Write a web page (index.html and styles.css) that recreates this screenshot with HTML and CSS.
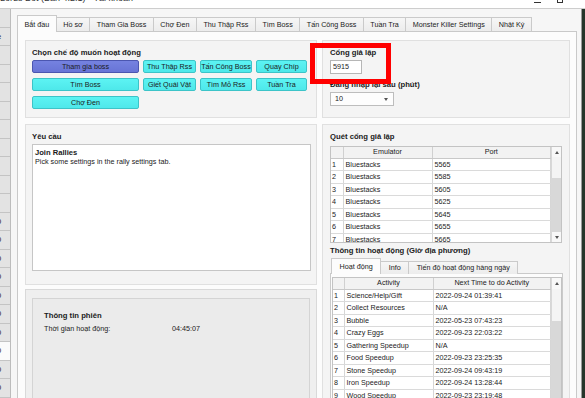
FILE: index.html
```html
<!DOCTYPE html>
<html lang="vi">
<head>
  <meta charset="UTF-8">
  <title>Bắt đầu</title>
  <link rel="stylesheet" href="styles.css">
</head>
<body>
  <div class="titlebar">
    <span class="title">Lords Bot (Bản 4.2.1) - Tài khoản</span>
    <span class="winctl"><i class="min"></i><i class="max"></i></span>
  </div>

  <div class="window">
    <div class="sidelist">
      <div></div><div><span>e</span></div><div></div><div></div><div></div><div></div>
      <div></div><div></div><div></div><div></div><div></div>
      <div><span>0</span></div><div><span>0</span></div><div><span>0</span></div>
      <div><span>0</span></div><div><span>0</span></div><div><span>0</span></div>
      <div><span>0</span></div><div class="sel"><span>0</span></div>
      <div><span>0</span></div><div><span>0</span></div><div><span>0</span></div>
    </div>

    <div class="main">
      <div class="tabs">
        <div class="tab active">Bắt đầu</div>
        <div class="tab">Hồ sơ</div>
        <div class="tab">Tham Gia Boss</div>
        <div class="tab">Chợ Đen</div>
        <div class="tab">Thu Thập Rss</div>
        <div class="tab">Tìm Boss</div>
        <div class="tab">Tấn Công Boss</div>
        <div class="tab">Tuần Tra</div>
        <div class="tab">Monster Killer Settings</div>
        <div class="tab">Nhật Ký</div>
      </div>

      <div class="pane">
        <div class="col left">
          <section class="group modes">
            <div class="label">Chọn chế độ muốn hoạt động</div>
            <div class="btns">
              <div class="btn on">Tham gia boss</div>
              <div class="btn">Thu Thập Rss</div>
              <div class="btn">Tấn Công Boss</div>
              <div class="btn">Quay Chíp</div>
              <div class="btn">Tìm Boss</div>
              <div class="btn">Giết Quái Vật</div>
              <div class="btn">Tìm Mỏ Rss</div>
              <div class="btn">Tuần Tra</div>
              <div class="btn">Chợ Đen</div>
            </div>
          </section>

          <section class="group req">
            <div class="label">Yêu cầu</div>
            <div class="textbox">
              <b>Join Rallies</b><br>
              Pick some settings in the rally settings tab.
            </div>
          </section>

          <section class="group session">
            <div class="sessionbox">
              <div class="label">Thông tin phiên</div>
              <div class="kv">
                <span>Thời gian hoạt động:</span>
                <span>04:45:07</span>
              </div>
            </div>
          </section>
        </div>

        <div class="col right">
          <section class="group ports">
            <div class="label">Cổng giả lập</div>
            <div class="field">5915</div>
            <div class="label sub">Đăng nhập lại sau (phút)</div>
            <div class="combo"><span>10</span><i class="tri-down"></i></div>
            <div class="highlight"></div>
          </section>

          <section class="group scan">
            <div class="label">Quét cổng giả lập</div>
            <div class="grid ports-grid">
              <table>
                <colgroup><col class="c-idx"><col class="c-name"><col></colgroup>
                <thead><tr><th></th><th>Emulator</th><th>Port</th></tr></thead>
                <tbody>
                  <tr><td>1</td><td>Bluestacks</td><td>5565</td></tr>
                  <tr><td>2</td><td>Bluestacks</td><td>5585</td></tr>
                  <tr><td>3</td><td>Bluestacks</td><td>5605</td></tr>
                  <tr><td>4</td><td>Bluestacks</td><td>5625</td></tr>
                  <tr><td>5</td><td>Bluestacks</td><td>5645</td></tr>
                  <tr><td>6</td><td>Bluestacks</td><td>5655</td></tr>
                  <tr><td>7</td><td>Bluestacks</td><td>5665</td></tr>
                </tbody>
              </table>
              <div class="vscroll">
                <div class="arrow"><i class="tri-up"></i></div>
                <div class="gap-a"></div>
                <div class="thumb"></div>
                <div class="arrow"><i class="tri-down"></i></div>
              </div>
            </div>

            <div class="label act">Thông tin hoạt động (Giờ địa phương)</div>
            <div class="subtabs">
              <div class="stab active">Hoạt động</div>
              <div class="stab">Info</div>
              <div class="stab">Tiến độ hoạt động hàng ngày</div>
            </div>
            <div class="subpane">
              <div class="grid act-grid">
                <table>
                  <colgroup><col class="c-idx2"><col class="c-name"><col></colgroup>
                  <thead><tr><th></th><th>Activity</th><th>Next Time to do Activity</th></tr></thead>
                  <tbody>
                    <tr><td>1</td><td>Science/Help/Gift</td><td>2022-09-24 01:39:41</td></tr>
                    <tr><td>2</td><td>Collect Resources</td><td>N/A</td></tr>
                    <tr><td>3</td><td>Bubble</td><td>2022-05-23 07:43:23</td></tr>
                    <tr><td>4</td><td>Crazy Eggs</td><td>2022-09-23 22:03:22</td></tr>
                    <tr><td>5</td><td>Gathering Speedup</td><td>N/A</td></tr>
                    <tr><td>6</td><td>Food Speedup</td><td>2022-09-23 23:25:35</td></tr>
                    <tr><td>7</td><td>Stone Speedup</td><td>2022-09-24 09:43:19</td></tr>
                    <tr><td>8</td><td>Iron Speedup</td><td>2022-09-24 13:28:44</td></tr>
                    <tr><td>9</td><td>Wood Speedup</td><td>2022-09-23 23:19:48</td></tr>
                    <tr><td>10</td><td>Gold Speedup</td><td>N/A</td></tr>
                  </tbody>
                </table>
                <div class="vscroll">
                  <div class="arrow tall"><i class="tri-up"></i></div>
                  <div class="gap-b"></div>
                  <div class="thumb grow"></div>
                </div>
              </div>
            </div>
          </section>
        </div>
      </div>
    </div>

    <div class="edge"></div>
  </div>
</body>
</html>
```

FILE: styles.css
```css
* {
  box-sizing: border-box;
}
body {
  margin: 0;
  width: 585px;
  height: 398px;
  overflow: hidden;
  background: #ffffff;
  font-family: 'Liberation Sans', Arial, sans-serif;
  font-size: 7.2px;
  color: #1b1b1b;
}

/* title bar (cut off at the top) */
.titlebar {
  height: 9px;
  border-bottom: 1px solid #cdcdcd;
  display: flex;
  justify-content: space-between;
  overflow: hidden;
}
.title {
  font-size: 9px;
  line-height: 9px;
  margin-top: -6px;
  color: #333;
  white-space: nowrap;
}
.winctl {
  display: flex;
  gap: 16px;
  padding-right: 22px;
}
.winctl .min {
  width: 7px;
  height: 1px;
  margin-top: 2px;
  background: #333;
}
.winctl .max {
  width: 6px;
  height: 4px;
  margin-top: -1px;
  border: 1px solid #333;
}

.window {
  display: flex;
  height: 389px;
}

/* list on the far left */
.sidelist {
  width: 11px;
  border-right: 1px solid #bcbcbc;
  background: #e3e3e3;
  overflow: hidden;
}
.sidelist div {
  height: 18.5px;
  border-bottom: 1px solid #c4c4c4;
  line-height: 18px;
  font-size: 7.5px;
  white-space: nowrap;
}
.sidelist span {
  margin-left: -3px;
}
.sidelist .sel {
  background: #fbfbfb;
}

.main {
  flex: 1;
  background: #f6f6f6;
  padding: 6px 0 0 6px;
  overflow: hidden;
}
.edge {
  width: 4px;
  border-left: 1px solid #9a9a9a;
  background: #26352a;
}

/* top tabs */
.tabs {
  display: flex;
  height: 17px;
  position: relative;
  z-index: 1;
}
.tab {
  height: 14px;
  margin-top: 2px;
  margin-left: -1px;
  padding: 0 6.5px;
  line-height: 13px;
  border: 1px solid #cacaca;
  border-bottom: 0;
  background: linear-gradient(#f6f6f6, #ececec);
  white-space: nowrap;
}
.tab.active {
  height: 17px;
  margin-top: 0;
  margin-left: 0;
  line-height: 17px;
  background: #fcfcfc;
}
.pane {
  width: 560px;
  height: 372px;
  margin-top: -1px;
  border: 1px solid #c9c9c9;
  background: #fcfcfc;
  display: flex;
  gap: 5px;
  padding: 8px 6px 0 7px;
}

.col {
  display: flex;
  flex-direction: column;
}
.col.left {
  width: 292px;
}
.col.right {
  width: 248px;
}

.group {
  flex-shrink: 0;
  background: #f4f4f4;
  border: 1px solid #e0e0e0;
  padding: 7px 6px;
}
.label {
  font-weight: bold;
  font-size: 7.7px;
  line-height: 9px;
  height: 9px;
  white-space: nowrap;
}

/* mode buttons */
.modes {
  height: 78px;
}
.btns {
  display: grid;
  grid-template-columns: 107px 53px 52px 51px;
  grid-auto-rows: 13px;
  gap: 5px 4px;
  margin-top: 3px;
}
.btn {
  background: linear-gradient(#5cf3f3, #4ee8ea);
  border: 1px solid #3cc4c8;
  border-radius: 2px;
  text-align: center;
  line-height: 11px;
  white-space: nowrap;
}
.btn.on {
  background: linear-gradient(#7582e0, #6874d6);
  border-color: #4b56b0;
}

/* emulator port */
.ports {
  position: relative;
  height: 78px;
  padding: 7px;
}
.field {
  width: 32px;
  height: 14px;
  margin-top: 3px;
  padding-left: 2px;
  line-height: 12px;
  background: #ffffff;
  border: 1px solid #b6b6b6;
}
.label.sub {
  margin-top: 6px;
}
.combo {
  width: 64px;
  height: 14px;
  margin-top: 3px;
  padding: 0 5px 0 4px;
  line-height: 12px;
  display: flex;
  justify-content: space-between;
  align-items: center;
  background: #fdfdfd;
  border: 1px solid #bdbdbd;
}
.tri-down {
  width: 0;
  height: 0;
  border-left: 2.5px solid transparent;
  border-right: 2.5px solid transparent;
  border-top: 3px solid #555;
}
.tri-up {
  width: 0;
  height: 0;
  border-left: 2.5px solid transparent;
  border-right: 2.5px solid transparent;
  border-bottom: 3px solid #555;
}
.highlight {
  position: absolute;
  left: -13px;
  top: 2px;
  width: 81px;
  height: 41px;
  border: 5px solid #ff0000;
  z-index: 2;
}

/* requirements */
.req {
  height: 161px;
  margin-top: 6px;
  padding-bottom: 0;
}
.textbox {
  width: 279px;
  height: 127px;
  margin-top: 3px;
  padding: 3px 2px;
  line-height: 9px;
  background: #ffffff;
  border: 1px solid #c6c6c6;
}
.textbox b {
  font-size: 7.6px;
}

/* session info */
.session {
  flex: 1 1 0;
  min-height: 0;
  overflow: hidden;
  margin-top: 4px;
  padding: 8px 6px 0 6px;
  background: #efefef;
  border-color: #d9d9d9;
}
.sessionbox {
  height: 200px;
  padding: 12px 11px;
  background: #ebebeb;
  border: 1px solid #d4d4d4;
}
.kv {
  display: grid;
  grid-template-columns: 128px auto;
  margin-top: 4px;
  line-height: 9px;
}

/* scan + activity */
.scan {
  flex: 1 1 0;
  min-height: 0;
  overflow: hidden;
  margin-top: 6px;
  padding: 7px 7px 0 7px;
}
.grid {
  display: flex;
  flex-shrink: 0;
  background: #ffffff;
  border: 1px solid #c3c3c3;
  overflow: hidden;
}
.ports-grid {
  width: 232px;
  height: 97px;
  margin-top: 5px;
}
.act-grid {
  width: 230px;
  height: 140px;
}
table {
  flex: 1;
  border-collapse: collapse;
  table-layout: fixed;
  align-self: flex-start;
}
.c-idx {
  width: 12px;
}
.c-idx2 {
  width: 11px;
}
.c-name {
  width: 89px;
}
th {
  height: 11px;
  padding: 0;
  line-height: 10px;
  font-weight: normal;
  background: #f2f2f2;
  border-right: 1px solid #d0d0d0;
  border-bottom: 1px solid #c8c8c8;
}
td {
  height: 12.5px;
  padding: 0 2px;
  line-height: 11px;
  border-right: 1px solid #d6d6d6;
  border-bottom: 1px solid #dadada;
  white-space: nowrap;
  overflow: hidden;
}
td:first-child {
  padding: 0 1px;
}
.vscroll {
  width: 10px;
  flex-shrink: 0;
  display: flex;
  flex-direction: column;
  background: #f4f4f4;
  border-left: 1px solid #d8d8d8;
}
.vscroll .arrow {
  height: 10px;
  flex-shrink: 0;
  display: flex;
  align-items: center;
  justify-content: center;
  background: #f8f8f8;
}
.vscroll .arrow.tall {
  height: 11px;
}
.gap-a {
  height: 21px;
  flex-shrink: 0;
}
.gap-b {
  height: 32px;
  flex-shrink: 0;
}
.thumb {
  height: 54px;
  flex-shrink: 0;
  background: #d8d8d8;
}
.thumb.grow {
  flex: 1;
}

.label.act {
  margin-top: 3px;
  flex-shrink: 0;
}
.subtabs {
  display: flex;
  flex-shrink: 0;
  height: 16px;
  margin-top: 3px;
  margin-left: 1px;
  position: relative;
  z-index: 1;
}
.stab {
  height: 13px;
  margin-top: 3px;
  margin-left: -1px;
  padding: 0 7.5px;
  line-height: 12px;
  border: 1px solid #cacaca;
  border-bottom: 0;
  background: linear-gradient(#f6f6f6, #ececec);
  white-space: nowrap;
}
.stab.active {
  height: 16px;
  margin-top: 0;
  margin-left: 0;
  line-height: 15px;
  background: #fcfcfc;
}
.subpane {
  flex-shrink: 0;
  width: 233px;
  height: 160px;
  margin-top: -1px;
  padding: 3px 0 0 1px;
  background: #fcfcfc;
  border: 1px solid #cacaca;
}
```
